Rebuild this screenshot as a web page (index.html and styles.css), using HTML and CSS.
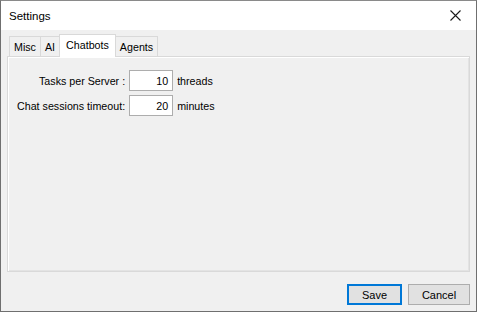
FILE: index.html
```html
<!DOCTYPE html>
<html lang="en">
<head>
  <meta charset="UTF-8" />
  <title>Settings</title>
  <link rel="stylesheet" href="styles.css">
</head>
<body>
  <div class="window">
    <div class="titlebar">
      <span class="title">Settings</span>
      <svg class="close" width="11" height="11" viewBox="0 0 11 11">
        <path d="M0.5 0.5 L10.5 10.5 M10.5 0.5 L0.5 10.5" stroke="#1a1a1a" stroke-width="1.1" fill="none" />
      </svg>
    </div>

    <div class="client">
      <div class="tabs">
        <div class="tab">Misc</div>
        <div class="tab">AI</div>
        <div class="tab active">Chatbots</div>
        <div class="tab">Agents</div>
      </div>

      <div class="panel">
        <div class="form">
          <label class="label">Tasks per Server :</label>
          <div class="field">10</div>
          <span class="unit">threads</span>

          <label class="label">Chat sessions timeout:</label>
          <div class="field">20</div>
          <span class="unit">minutes</span>
        </div>
      </div>

      <div class="buttons">
        <button class="btn default">Save</button>
        <button class="btn">Cancel</button>
      </div>
    </div>
  </div>
</body>
</html>
```

FILE: styles.css
```css
body {
  margin: 0;
  font-family: "Liberation Sans", Arial, sans-serif;
  font-size: 10.7px;
  color: #000;
  background: #fff;
}

.window {
  width: 477px;
  height: 312px;
  box-sizing: border-box;
  border: 1px solid #6f6f6f;
  border-top-color: #8a8a8a;
  display: flex;
  flex-direction: column;
}

.titlebar {
  flex-shrink: 0;
  height: 29px;
  background: #fff;
  display: flex;
  align-items: center;
  justify-content: space-between;
  padding: 0 15px 0 8px;
}

.title {
  font-size: 11.5px;
}

.client {
  flex: 1;
  background: #f0f0f0;
  display: flex;
  flex-direction: column;
  padding: 6px 6px 6px 6px;
}

.tabs {
  flex-shrink: 0;
  display: flex;
  align-items: flex-end;
  height: 20px;
  padding-left: 2px;
  position: relative;
  z-index: 1;
}

.tab {
  height: 19px;
  line-height: 20px;
  padding: 0 4px;
  border: 1px solid #d9d9d9;
  border-bottom: none;
  border-right: none;
  background: #f0f0f0;
}

.tab:last-child {
  border-right: 1px solid #d9d9d9;
}

.tab.active {
  height: 22px;
  line-height: 20px;
  background: #fff;
  padding: 0 6px;
  margin-bottom: -1px;
  border-right: 1px solid #d9d9d9;
}

.tab.active + .tab {
  border-left: none;
}

.panel {
  flex-shrink: 0;
  height: 216px;
  box-sizing: border-box;
  border: 1px solid #d9d9d9;
  box-shadow: inset 1px 1px 0 #fff, inset -1px -1px 0 #e3e3e3;
  background: #f0f0f0;
  padding: 13px 0 0 9px;
}

.form {
  display: grid;
  grid-template-columns: auto 44px auto;
  justify-content: start;
  align-items: center;
  column-gap: 4px;
  row-gap: 4px;
}

.label {
  text-align: right;
}

.field {
  height: 19px;
  line-height: 20px;
  border: 1px solid #adadad;
  background: #fff;
  text-align: right;
  padding-right: 4px;
  width: 38px;
}

.buttons {
  display: flex;
  justify-content: flex-end;
  gap: 6px;
  margin-top: 12px;
}

.btn {
  font-family: inherit;
  font-size: 11px;
  height: 21px;
  width: 62px;
  background: #e1e1e1;
  border: 1px solid #adadad;
  padding: 0;
  color: #000;
}

.btn.default {
  width: 55px;
  border: 2px solid #0078d7;
}
```
